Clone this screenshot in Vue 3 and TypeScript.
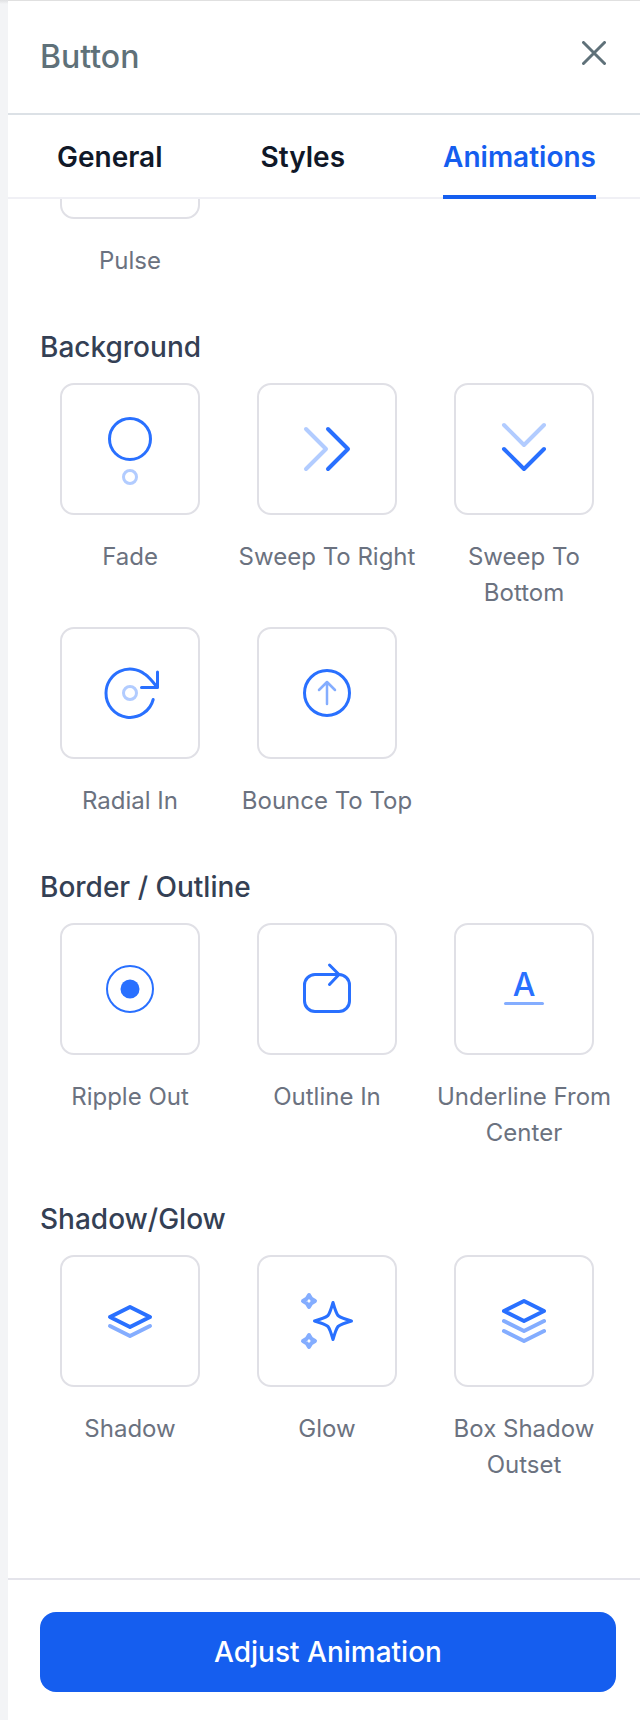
<script setup lang="ts">
import { ref } from 'vue'

interface Shape {
  d: string
  tone?: 'soft' | 'mid'
  width: number
  solid?: boolean
}
interface Effect {
  name: string
  shapes: Shape[]
  letter?: string
}
interface Group {
  title: string
  effects: Effect[]
}

const tabs = ['General', 'Styles', 'Animations']
const activeTab = ref('Animations')

// Icon geometry is centred on the origin of an 80 by 80 canvas.
const circle = (r: number, cy = 0): string =>
  `M${-r} ${cy}a${r} ${r} 0 1 1 ${2 * r} 0a${r} ${r} 0 1 1 ${-2 * r} 0Z`
const sparkle = (cy: number): string =>
  `M-18 ${cy - 6}L-15.7 ${cy - 2.3}L-12 ${cy}L-15.7 ${cy + 2.3}L-18 ${cy + 6}L-20.3 ${cy + 2.3}L-24 ${cy}L-20.3 ${cy - 2.3}Z`

const groups: Group[] = [
  { title: '', effects: [{ name: 'Pulse', shapes: [] }] },
  {
    title: 'Background',
    effects: [
      {
        name: 'Fade',
        shapes: [
          { d: circle(20.5, -10), width: 3 },
          { d: circle(6.5, 28), width: 3, tone: 'soft' },
        ],
      },
      {
        name: 'Sweep To Right',
        shapes: [
          { d: 'M-21-20L-1 0L-21 20', width: 4, tone: 'soft' },
          { d: 'M1-20L21 0L1 20', width: 4 },
        ],
      },
      {
        name: 'Sweep To Bottom',
        shapes: [
          { d: 'M-20-24L0-4L20-24', width: 4, tone: 'soft' },
          { d: 'M-20 0L0 20L20 0', width: 4 },
        ],
      },
      {
        name: 'Radial In',
        shapes: [
          { d: 'M23.2 6.5A24 24 0 0 1-24 0A24 24 0 0 1 15-18.7Q19-16 27-6', width: 3 },
          { d: 'M27.5-21V-5.5H11.5', width: 3 },
          { d: circle(6.5), width: 3, tone: 'soft' },
        ],
      },
      {
        name: 'Bounce To Top',
        shapes: [
          { d: circle(22.5), width: 3 },
          { d: 'M0 11V-11M-8-3L0-11L8-3', width: 2.5, tone: 'mid' },
        ],
      },
    ],
  },
  {
    title: 'Border / Outline',
    effects: [
      {
        name: 'Ripple Out',
        shapes: [
          { d: circle(23), width: 2 },
          { d: circle(9.5), width: 0, solid: true },
        ],
      },
      {
        name: 'Outline In',
        shapes: [
          { d: 'M-12-14.5H12a10.5 10.5 0 0 1 10.5 10.5V12a10.5 10.5 0 0 1-10.5 10.5H-12a10.5 10.5 0 0 1-10.5-10.5V-4a10.5 10.5 0 0 1 10.5-10.5Z', width: 3 },
          { d: 'M2.5-24L12-14.5L2.5-4.5', width: 3 },
        ],
      },
      {
        name: 'Underline From Center',
        letter: 'A',
        shapes: [{ d: 'M-18.5 14.5H18.5', width: 3, tone: 'mid' }],
      },
    ],
  },
  {
    title: 'Shadow/Glow',
    effects: [
      {
        name: 'Shadow',
        shapes: [
          { d: 'M-20 5L0 15L20 5', width: 4, tone: 'mid' },
          { d: 'M0-14L20-4L0 6L-20-4Z', width: 4 },
        ],
      },
      {
        name: 'Glow',
        shapes: [
          { d: sparkle(-20), width: 4, tone: 'mid' },
          { d: sparkle(20), width: 4, tone: 'mid' },
          { d: 'M6-18.5Q9-8 11-5.5Q14-3 24.5 0Q14 3 11 5.5Q9 8 6 18.5Q3 8 1 5.5Q-2 3-12.5 0Q-2-3 1-5.5Q3-8 6-18.5Z', width: 3 },
        ],
      },
      {
        name: 'Box Shadow Outset',
        shapes: [
          { d: 'M-20 0L0 10L20 0M-20 10L0 20L20 10', width: 4, tone: 'mid' },
          { d: 'M0-20L20-10L0 0L-20-10Z', width: 4 },
        ],
      },
    ],
  },
]
</script>

<template>
  <div class="shell">
    <aside class="panel">
      <header class="head">
        <h1>Button</h1>
        <button type="button" class="close" aria-label="Close">
          <svg width="24" height="24" viewBox="0 0 24 24" aria-hidden="true">
            <path d="M1.5 1.5L22.5 22.5M22.5 1.5L1.5 22.5" />
          </svg>
        </button>
      </header>

      <nav class="tabs">
        <button
          v-for="tab in tabs"
          :key="tab"
          type="button"
          class="tab"
          :class="{ active: tab === activeTab }"
          @click="activeTab = tab"
        >{{ tab }}</button>
      </nav>

      <main class="content">
        <section v-for="group in groups" :key="group.title" class="group">
          <h2 v-if="group.title">{{ group.title }}</h2>
          <div class="grid">
            <button v-for="effect in group.effects" :key="effect.name" type="button" class="effect">
              <span class="card">
                <svg class="icon" viewBox="-40 -40 80 80" aria-hidden="true">
                  <path
                    v-for="(shape, i) in effect.shapes"
                    :key="i"
                    :d="shape.d"
                    :stroke-width="shape.width"
                    :class="[shape.tone, { solid: shape.solid }]"
                  />
                  <text v-if="effect.letter" class="letter" x="0" y="7" text-anchor="middle">{{ effect.letter }}</text>
                </svg>
              </span>
              <span class="label">{{ effect.name }}</span>
            </button>
          </div>
        </section>
      </main>

      <footer class="foot">
        <button type="button" class="primary">Adjust Animation</button>
      </footer>
    </aside>
  </div>
</template>

<style>
body {
  margin: 0;
}
</style>

<style scoped>
.shell {
  box-sizing: border-box;
  min-height: 100vh;
  display: flex;
  padding-left: 8px;
  background: linear-gradient(#dfe0e2, #f3f4f6 4px);
  font-family: Inter, "Liberation Sans", sans-serif;
}
button {
  margin: 0;
  padding: 0;
  border: 0;
  background: none;
  font: inherit;
  color: inherit;
  cursor: pointer;
}
.panel {
  flex: 1;
  min-width: 0;
  display: flex;
  flex-direction: column;
  background: #fff;
  border-top: 1px solid #e0e0e0;
}
.head {
  display: flex;
  justify-content: space-between;
  align-items: flex-start;
  padding: 32px 34px 32px 32px;
  border-bottom: 2px solid #dce1e6;
}
h1 {
  margin: 0;
  font-size: 32px;
  line-height: 48px;
  font-weight: 500;
  color: #5f7179;
}
.close {
  display: flex;
  padding: 8px 0;
}
.close path {
  fill: none;
  stroke: #5f7179;
  stroke-width: 3;
  stroke-linecap: round;
}
.tabs {
  display: flex;
  justify-content: space-between;
  padding: 0 44px 0 49px;
  box-shadow: inset 0 -2px #f0f0f5;
}
.tab {
  padding: 22px 0 18px;
  border-bottom: 4px solid transparent;
  font-size: 28px;
  line-height: 40px;
  font-weight: 600;
  color: #101828;
}
.tab.active {
  color: #155eef;
  border-color: #155eef;
}
.content {
  flex: 1;
  overflow: hidden;
  padding: 0 26px 64px 32px;
}
.group {
  margin-bottom: 48px;
}
/* The list is scrolled so that its first row is partly under the tabs. */
.group:first-child {
  margin-top: -112px;
}
.group:last-child {
  margin-bottom: 0;
}
h2 {
  margin: 0 0 16px;
  font-size: 28px;
  line-height: 40px;
  font-weight: 500;
  color: #344054;
}
.grid {
  display: grid;
  grid-template-columns: repeat(3, minmax(0, 1fr));
  gap: 16px 17px;
}
.effect {
  display: flex;
  flex-direction: column;
  align-items: center;
  gap: 24px;
}
.card {
  box-sizing: border-box;
  width: 140px;
  height: 132px;
  display: flex;
  align-items: center;
  justify-content: center;
  border: 2px solid #e0e0e6;
  border-radius: 14px;
}
.icon {
  width: 80px;
  height: 80px;
}
.icon path {
  fill: none;
  stroke: #2970ff;
  stroke-linecap: round;
  stroke-linejoin: round;
}
.icon .soft {
  stroke: #b2ccff;
}
.icon .mid {
  stroke: #84adff;
}
.icon .solid {
  fill: #2970ff;
}
.letter {
  fill: #2970ff;
  font-size: 32px;
  font-weight: 500;
}
.label {
  font-size: 24px;
  line-height: 36px;
  color: #6b7280;
}
.foot {
  padding: 32px 24px 28px 32px;
  border-top: 2px solid #e4e4eb;
}
.primary {
  width: 100%;
  height: 80px;
  border-radius: 16px;
  background: #155eef;
  color: #fff;
  font-size: 28px;
  font-weight: 500;
}
</style>
